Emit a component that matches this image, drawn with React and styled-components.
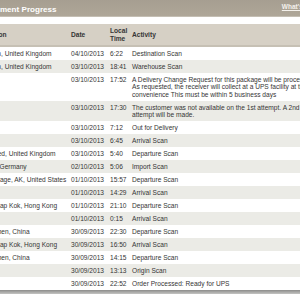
import React from "react";
import styled, { createGlobalStyle } from "styled-components";

const GlobalStyle = createGlobalStyle`
  html, body {
    margin: 0;
    padding: 0;
    background: #fff;
    font-family: "Liberation Sans", Arial, sans-serif;
  }
`;

const Viewport = styled.div`
  width: 300px;
  height: 300px;
  overflow: hidden;
  background: #fff;
`;

const Panel = styled.div`
  width: 351px;
  margin-left: -25px;
`;

const TitleBar = styled.div`
  height: 17px;
  display: flex;
  justify-content: space-between;
  align-items: flex-start;
  padding: 0 4px 0 7.4px;
  background: linear-gradient(#a69e91, #aea698);
  border-bottom: 1px solid #c4beb3;
  box-sizing: border-box;
`;

const Title = styled.h2`
  margin: 0;
  padding-top: 5px;
  font-size: 8.1px;
  line-height: 9px;
  font-weight: bold;
  color: #fff;
`;

const HelpLink = styled.a`
  padding-top: 3px;
  font-size: 6.5px;
  line-height: 8px;
  font-weight: bold;
  color: #f4f1ec;
  text-decoration: underline;
`;

const Table = styled.div`
  margin-top: 7px;
  color: #353535;
  font-size: 6.6px;
`;

const Row = styled.div`
  display: grid;
  grid-template-columns: 96px 39px 22px 1fr;
  align-items: ${(p) => (p.$head ? "center" : "start")};
  background: ${(p) => (p.$head ? "#d6d0c5" : p.$alt ? "#ebebe6" : "#fff")};
  padding: ${(p) => (p.$head ? "3px 0 2px" : "2.8px 0")};
  line-height: ${(p) => (p.$head ? "8px" : "7.4px")};
  font-weight: ${(p) => (p.$head ? "bold" : "normal")};
  border-bottom: ${(p) => (p.$head ? "2px solid #c6c0b4" : "none")};
  white-space: nowrap;
`;

const Cell = styled.div`
  padding-left: ${(p) => (p.$first ? "4px" : "0")};
`;

const Footer = styled.div`
  height: 4px;
  background: linear-gradient(#8c8c8a, #c4c4c2);
`;

const rows = [
  ["London, United Kingdom", "04/10/2013", "6:22", ["Destination Scan"]],
  ["London, United Kingdom", "03/10/2013", "18:41", ["Warehouse Scan"]],
  [
    "",
    "03/10/2013",
    "17:52",
    [
      "A Delivery Change Request for this package will be processed.",
      "As requested, the receiver will collect at a UPS facility at their",
      "convenience This must be within 5 business days",
    ],
  ],
  [
    "",
    "03/10/2013",
    "17:30",
    [
      "The customer was not available on the 1st attempt. A 2nd",
      "attempt will be made.",
    ],
  ],
  ["", "03/10/2013", "7:12", ["Out for Delivery"]],
  ["", "03/10/2013", "6:45", ["Arrival Scan"]],
  ["Stansted, United Kingdom", "03/10/2013", "5:40", ["Departure Scan"]],
  ["Koeln, Germany", "02/10/2013", "5:06", ["Import Scan"]],
  ["Anchorage, AK, United States", "01/10/2013", "15:57", ["Departure Scan"]],
  ["", "01/10/2013", "14:29", ["Arrival Scan"]],
  ["Chek Lap Kok, Hong Kong", "01/10/2013", "21:10", ["Departure Scan"]],
  ["", "01/10/2013", "0:15", ["Arrival Scan"]],
  ["Shenzhen, China", "30/09/2013", "22:30", ["Departure Scan"]],
  ["Chek Lap Kok, Hong Kong", "30/09/2013", "16:50", ["Arrival Scan"]],
  ["Shenzhen, China", "30/09/2013", "14:15", ["Departure Scan"]],
  ["", "30/09/2013", "13:13", ["Origin Scan"]],
  ["", "30/09/2013", "22:52", ["Order Processed: Ready for UPS"]],
];

const App = () => {
  return (
    <Viewport>
      <GlobalStyle />
      <Panel>
        <TitleBar>
          <Title>Shipment Progress</Title>
          <HelpLink>What's This?</HelpLink>
        </TitleBar>
        <Table>
          <Row $head>
            <Cell $first>Location</Cell>
            <Cell>Date</Cell>
            <Cell>
              Local
              <br />
              Time
            </Cell>
            <Cell>Activity</Cell>
          </Row>
          {rows.map(([place, date, time, activity], i) => (
            <Row key={i} $alt={i % 2 === 1}>
              <Cell $first>{place}</Cell>
              <Cell>{date}</Cell>
              <Cell>{time}</Cell>
              <Cell>
                {activity.map((line, j) => (
                  <div key={j}>{line}</div>
                ))}
              </Cell>
            </Row>
          ))}
        </Table>
        <Footer />
      </Panel>
    </Viewport>
  );
};

export default App;
